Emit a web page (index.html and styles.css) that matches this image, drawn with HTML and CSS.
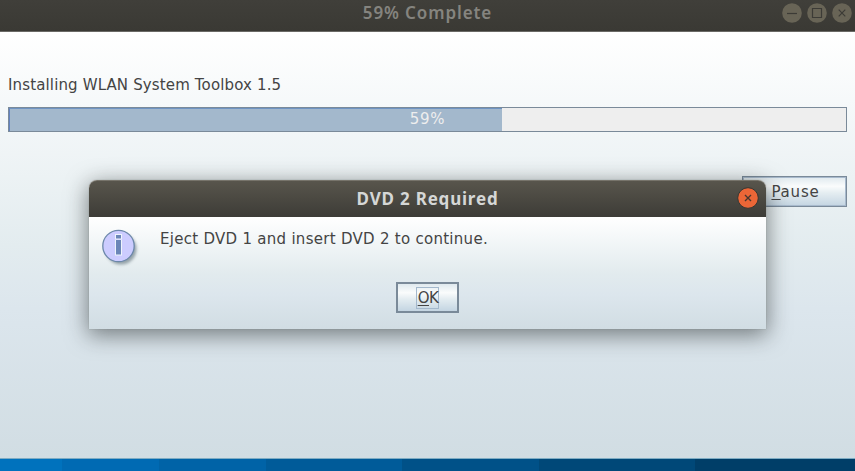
FILE: index.html
```html
<!DOCTYPE html>
<html lang="en">
<head>
<meta charset="utf-8">
<title>59% Complete</title>
<link rel="stylesheet" href="styles.css">
</head>
<body>
<main class="window">
  <header class="titlebar">
    <h1 class="window-title">59% Complete</h1>
    <div class="controls">
      <svg class="control" viewBox="0 0 20 20"><circle cx="10" cy="10" r="9.8"/><path d="M5 10.5h10"/></svg>
      <svg class="control" viewBox="0 0 20 20"><circle cx="10" cy="10" r="9.8"/><path d="M5.5 5.5h9v9h-9z"/></svg>
      <svg class="control" viewBox="0 0 20 20"><circle cx="10" cy="10" r="9.8"/><path d="M6.7 6.7l6.6 6.6M13.3 6.7l-6.6 6.6"/></svg>
    </div>
  </header>
  <section class="installer">
    <p class="status">Installing WLAN System Toolbox 1.5</p>
    <div class="progress"><div class="progress-fill"></div><span class="percent">59%</span></div>
    <button class="pause"><span class="pause-label"><u>P</u>ause</span></button>
  </section>
  <footer class="stripe"><i></i><i></i><i></i><i></i><i></i><i></i><i></i></footer>
</main>
<div class="dialog" role="dialog">
  <header class="dialog-bar">
    <h2 class="dialog-title">DVD 2 Required</h2>
    <svg class="dialog-close" viewBox="0 0 22 22"><circle cx="11" cy="11" r="10.3"/><path d="M8 8l6 6M14 8l-6 6"/></svg>
  </header>
  <div class="message-row">
    <svg class="info" viewBox="0 0 40 40">
      <defs><filter id="soft" x="-20%" y="-20%" width="150%" height="150%"><feGaussianBlur stdDeviation="1.5"/></filter></defs>
      <circle cx="19" cy="20" r="15.5" fill="#788890" opacity=".75" filter="url(#soft)"/>
      <circle cx="16.5" cy="17" r="15.7" fill="#ccccff" stroke="#6c88aa" stroke-width="1.3"/>
      <path d="M13 5h7v5.5h-7zM13 11h7v15.5h-7z" fill="#eef4fc"/>
      <path d="M14 6h5v3.5h-5zM14 11h5v14.5h-5z" fill="#6b86b8"/>
    </svg>
    <p class="message">Eject DVD 1 and insert DVD 2 to continue.</p>
  </div>
  <button class="ok"><span class="ok-label"><u>O</u>K</span></button>
</div>
</body>
</html>
```
FILE: styles.css
```css
* { box-sizing: border-box; }
body {
  margin: 0;
  width: 855px;
  height: 471px;
  overflow: hidden;
  position: relative;
  font-family: "DejaVu Sans", sans-serif;
  font-size: 15px;
  color: #444;
}
h1, h2, p { margin: 0; }
button {
  font: inherit;
  color: #444;
  padding: 0;
  background: linear-gradient(#dfe9ee 0%, #fafcfc 32%, #e4edf1 55%, #c4d5e2 100%);
}
u { text-decoration-thickness: 1px; text-underline-offset: 2px; text-decoration-skip-ink: none; }
.window { height: 471px; display: flex; flex-direction: column; }
.titlebar {
  height: 32px;
  display: grid;
  grid-template-columns: 1fr auto 1fr;
  background: linear-gradient(#403f3a, #3a3934);
  border-bottom: 1px solid #6b6a66;
}
.window-title {
  grid-column: 2;
  font: 600 17px/26px "Noto Sans", sans-serif;
  color: #85847f;
  letter-spacing: .9px;
  white-space: nowrap;
}
.controls { display: flex; gap: 5px; justify-content: flex-end; padding: 3px 3px 0 0; }
.control { width: 20px; height: 20px; }
.control circle { fill: #686456; }
.control path { fill: none; stroke: #3c3b36; stroke-width: 1.2; }
.installer {
  flex: 1;
  padding: 44px 8px 0;
  background: linear-gradient(#fff 0%, #e3ecef 50%, #dce6ed 65%, #d1dde3 100%);
  display: flex;
  flex-direction: column;
}
.status { font-size: 15px; line-height: 19px; letter-spacing: .14px; white-space: nowrap; }
.progress {
  height: 25px;
  margin-top: 12px;
  border: 1px solid #7a8a99;
  background: #eee;
  display: grid;
}
.progress-fill {
  grid-area: 1 / 1;
  width: 493px;
  background: #a3b8cc;
  border-top: 1px solid #6e93c2;
  border-left: 1px solid #6382bf;
}
.percent { grid-area: 1 / 1; text-align: center; line-height: 22px; color: #eee; letter-spacing: .7px; }
.pause {
  align-self: flex-end;
  width: 105px;
  height: 31px;
  margin-top: 44px;
  border: 1px solid #7a8a99;
  box-shadow: inset 0 0 0 1px #a8bacd;
}
.pause-label { position: relative; left: 1px; letter-spacing: .8px; }
.stripe {
  height: 13px;
  display: grid;
  grid-template-columns: 62px 97px 107px 136px 137px 156px 1fr;
  background: #7eacc3;
}
.stripe i { margin-top: 1px; }
.stripe i:nth-child(1) { background: #0072bd; }
.stripe i:nth-child(2) { background: #006ab3; }
.stripe i:nth-child(3) { background: #0063a7; }
.stripe i:nth-child(4) { background: #005b99; }
.stripe i:nth-child(5) { background: #005188; }
.stripe i:nth-child(6) { background: #004878; }
.stripe i:nth-child(7) { background: #003e68; }
.dialog {
  position: absolute;
  left: 89px;
  top: 180px;
  width: 677px;
  height: 149px;
  display: flex;
  flex-direction: column;
  border-radius: 8px 8px 0 0;
  background: linear-gradient(#fff 37px, #e2ebee 93px, #dce6ed 115px, #d1dde3 149px);
  box-shadow: 0 0 1px #737974, 0 5px 22px 1px rgba(30, 35, 35, .55);
}
.dialog-bar {
  height: 37px;
  display: grid;
  grid-template-columns: 1fr auto 1fr;
  background: linear-gradient(#58554c, #3d3c37);
  border-top: 1px solid #77746b;
  border-radius: 8px 8px 0 0;
}
.dialog-title {
  grid-column: 2;
  font: 700 17px/35px "Noto Sans", sans-serif;
  color: #d5d7d6;
  letter-spacing: .8px;
  white-space: nowrap;
}
.dialog-close { width: 22px; height: 22px; justify-self: end; margin: 6px 7px 0 0; }
.dialog-close circle { fill: #eb6637; stroke: #383732; stroke-width: 1; }
.dialog-close path { stroke: #48372f; stroke-width: 1.4; }
.message-row { display: flex; padding: 12px 0 0 13px; height: 65px; }
.info { width: 40px; height: 40px; }
.message { margin-left: 18px; line-height: 20px; letter-spacing: .28px; white-space: nowrap; }
.ok {
  align-self: center;
  width: 63px;
  height: 31px;
  border: 2px solid #7a8a99;
}
.ok-label { display: inline-block; height: 22px; line-height: 20px; padding: 0 0 0 1px; border: 1px solid #a3b8cc; letter-spacing: -.5px; }
```
